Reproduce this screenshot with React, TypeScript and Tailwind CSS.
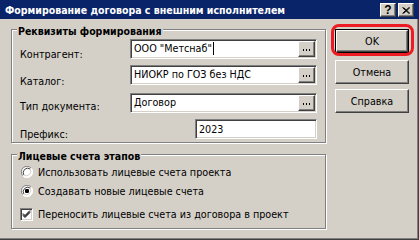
import React from "react";

const raised =
  "bg-[#d4d0c8] border border-t-white border-l-white border-b-[#404040] border-r-[#404040] shadow-[inset_-1px_-1px_0_#808080]";
const sunken =
  "bg-white border border-t-[#808080] border-l-[#808080] border-b-white border-r-white shadow-[inset_1px_1px_0_#404040,inset_-1px_-1px_0_#d4d0c8]";

function Dots() {
  return (
    <div className="flex gap-[2px] items-end h-[4px] pt-[1px]">
      <span className="w-[1px] h-[2px] bg-black" />
      <span className="w-[1px] h-[2px] bg-black" />
      <span className="w-[1px] h-[2px] bg-black" />
    </div>
  );
}

function EditWithButton({ text, caret }: { text: string; caret?: boolean }) {
  return (
    <div className={`${sunken} w-[187px] h-[20px] flex p-[1px]`}>
      <div className="flex-1 flex items-center pl-[2px] pb-[2px] leading-[13px] whitespace-nowrap">
        {text}
        {caret && <span className="inline-block w-[1px] h-[13px] bg-black ml-[1px]" />}
      </div>
      <div className={`${raised} w-[17px] h-[16px] flex items-center justify-center`}>
        <Dots />
      </div>
    </div>
  );
}

function Radio({ checked }: { checked?: boolean }) {
  return (
    <svg width="12" height="12" viewBox="0 0 12 12" className="shrink-0">
      <circle cx="6" cy="6" r="5.5" fill="#ffffff" />
      <path d="M10.2 2.2 A5.5 5.5 0 0 0 1.8 9.8" fill="none" stroke="#808080" strokeWidth="1" />
      <path d="M9.2 3 A4.5 4.5 0 0 0 2.8 9" fill="none" stroke="#404040" strokeWidth="1" />
      <path d="M1.8 9.8 A5.5 5.5 0 0 0 10.2 2.2" fill="none" stroke="#ffffff" strokeWidth="1" />
      <path d="M2.8 9 A4.5 4.5 0 0 0 9.2 3" fill="none" stroke="#d4d0c8" strokeWidth="1" />
      {checked && <rect x="4" y="4" width="4" height="4" rx="1.2" fill="#000" />}
    </svg>
  );
}

function Check() {
  return (
    <div className={`${sunken} w-[13px] h-[13px] shrink-0 relative`}>
      <svg width="13" height="13" viewBox="0 0 13 13" className="absolute left-[-1px] top-[-1px]">
        <path d="M3 5.5 L5 7.5 L10 2.5 M3 6.5 L5 8.5 L10 3.5 M3 7.5 L5 9.5 L10 4.5" fill="none" stroke="#000" strokeWidth="1" />
      </svg>
    </div>
  );
}

function Button({ label, def }: { label: string; def?: boolean }) {
  if (def) {
    return (
      <div className="w-[74px] h-[24px] border border-black">
        <div className={`${raised} w-full h-full flex items-center justify-center`}>{label}</div>
      </div>
    );
  }
  return (
    <div className={`${raised} w-[74px] h-[24px] flex items-center justify-center`}>{label}</div>
  );
}

export default function App() {
  return (
    <div className="w-[419px] h-[240px] bg-[#d4d0c8] flex flex-col text-[10.7px] leading-[13px] text-black font-['DejaVu_Sans_Condensed','Liberation_Sans',sans-serif] overflow-hidden">
      {/* title bar */}
      <div className="h-[19px] bg-[#0a246a] flex items-center pl-[5px] pr-[5px] shrink-0">
        <span className="text-white font-bold text-[10.5px] pt-[2px] whitespace-nowrap">
          Формирование договора с внешним исполнителем
        </span>
        <div className="ml-auto flex gap-[2px] pt-[1px]">
          <div className={`${raised} w-[16px] h-[14px] flex items-center justify-center font-bold text-[12px] font-['Liberation_Sans',sans-serif]`}>?</div>
          <div className={`${raised} w-[16px] h-[14px] flex items-center justify-center`}>
            <svg width="8" height="7" viewBox="0 0 8 7">
              <path d="M0.5 0.5 L7 6.5 M1.5 0.5 L8 6.5 M7 0.5 L0.5 6.5 M8 0.5 L1.5 6.5" stroke="#000" strokeWidth="1" fill="none" />
            </svg>
          </div>
        </div>
      </div>

      {/* body */}
      <div className="flex-1 flex border-r border-b border-r-[#404040] border-b-[#404040] shadow-[inset_-1px_-1px_0_#808080] pl-[11px]">
        {/* left column */}
        <div className="w-[315px] flex flex-col pt-[10px]">
          {/* group 1 */}
          <div className="relative h-[114px] border border-[#808080] shadow-[inset_1px_1px_0_#fff,1px_1px_0_#fff] pl-[8px] pt-[9px]">
            <div className="absolute left-[5px] top-[-5px] px-[1px] bg-[#d4d0c8] font-bold text-[10.5px] whitespace-nowrap">
              Реквизиты формирования
            </div>
            <div className="flex">
              <div className="w-[110px] pt-[9px]">Контрагент:</div>
              <EditWithButton text={'ООО "Метснаб"'} caret />
            </div>
            <div className="flex mt-[4px]">
              <div className="w-[110px] pt-[10px]">Каталог:</div>
              <EditWithButton text="НИОКР по ГОЗ без НДС" />
            </div>
            <div className="flex mt-[5px]">
              <div className="w-[110px] pt-[7px]">Тип документа:</div>
              <EditWithButton text="Договор" />
            </div>
            <div className="flex mt-[6px]">
              <div className="w-[175px] pt-[9px]">Префикс:</div>
              <div className={`${sunken} w-[122px] h-[20px] flex items-center pl-[3px]`}>2023</div>
            </div>
          </div>

          {/* group 2 */}
          <div className="relative mt-[11px] h-[75px] border border-[#808080] shadow-[inset_1px_1px_0_#fff,1px_1px_0_#fff] pt-[11px]">
            <div className="absolute left-[5px] top-[-5px] px-[1px] bg-[#d4d0c8] font-bold text-[10.5px] whitespace-nowrap">
              Лицевые счета этапов
            </div>
            <div className="flex items-center h-[12px] pl-[9px] gap-[5px]">
              <Radio />
              <span className="whitespace-nowrap">Использовать лицевые счета проекта</span>
            </div>
            <div className="flex items-center h-[12px] mt-[7px] pl-[9px] gap-[5px]">
              <Radio checked />
              <span className="whitespace-nowrap">Создавать новые лицевые счета</span>
            </div>
            <div className="flex items-center h-[13px] mt-[11px] pl-[8px] gap-[5px]">
              <Check />
              <span className="whitespace-nowrap">Переносить лицевые счета из договора в проект</span>
            </div>
          </div>
        </div>

        {/* right column */}
        <div className="ml-[9px] flex flex-col pt-[10px]">
          <div className="relative">
            <Button label="OK" def />
            <div className="absolute left-[-4px] right-[-5px] top-[-5px] bottom-[-3px] border-[3px] border-[#ed1c24] rounded-[8px] pointer-events-none" />
          </div>
          <div className="mt-[7px]">
            <Button label="Отмена" />
          </div>
          <div className="mt-[5px]">
            <Button label="Справка" />
          </div>
        </div>
      </div>
    </div>
  );
}
